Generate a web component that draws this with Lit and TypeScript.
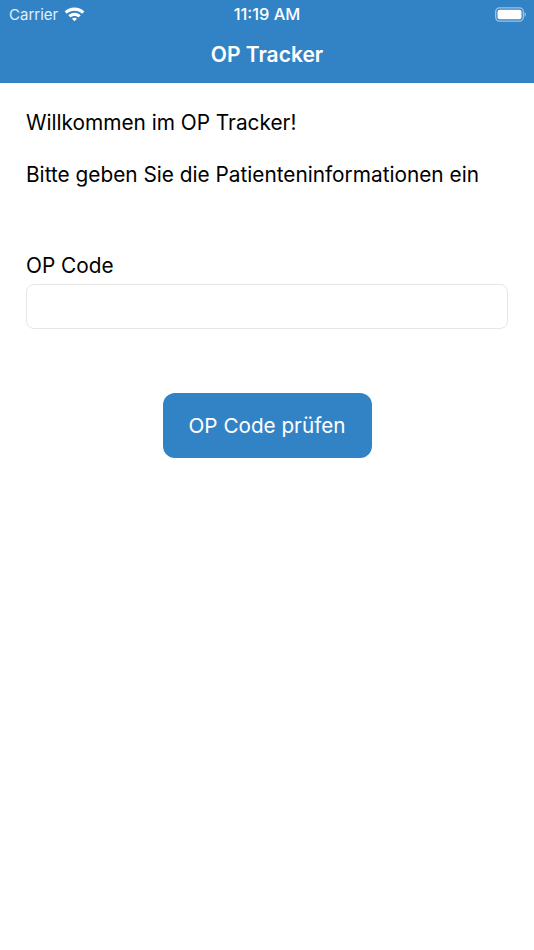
import { LitElement, html, css } from "lit";
import { customElement } from "lit/decorators.js";

@customElement("app-root")
export class AppRoot extends LitElement {
  static styles = css`
    :host {
      display: block;
      width: 534px;
      height: 950px;
      background: #fff;
      font-family: Inter, "Liberation Sans", sans-serif;
      color: #000;
      overflow: hidden;
    }
    .header {
      background: #3283c6;
      height: 83px;
      box-sizing: border-box;
      color: #fff;
      display: flex;
      flex-direction: column;
    }
    .status {
      height: 28px;
      display: grid;
      grid-template-columns: 1fr auto 1fr;
      align-items: center;
      padding: 0 8px;
      font-size: 15px;
    }
    .left { display: flex; align-items: center; gap: 6px; color: #e4eff8; padding-left: 1px; }
    .time { font-weight: 500; font-size: 16.4px; }
    .right { display: flex; justify-content: flex-end; }
    .title {
      flex: 1;
      display: flex;
      align-items: center;
      justify-content: center;
      font-size: 21px;
      font-weight: 600;
      padding-bottom: 3px;
    }
    .content { padding: 27px 26px 0; font-size: 20.8px; line-height: 26px; }
    .content p { margin: 0; }
    .second { margin-top: 26px !important; }
    .label { margin-top: 65px !important; }
    .input {
      margin-top: 5px;
      height: 45px;
      box-sizing: border-box;
      border: 1px solid #e6e6e6;
      border-radius: 8px;
      background: #fff;
    }
    .actions { display: flex; justify-content: center; margin-top: 64px; }
    button {
      width: 209px;
      height: 65px;
      border: none;
      border-radius: 12px;
      background: #3283c6;
      color: #fff;
      font: inherit;
      font-size: 20.7px;
      padding: 1px 0 0;
    }
  `;

  render() {
    return html`
      <div class="header">
        <div class="status">
          <div class="left">
            <span>Carrier</span>
            <svg width="21" height="16" viewBox="0 0 20 15" fill="#fff">
              <path d="M10 1.200c3.600 0 6.900 1.400 9.400 3.800l-2.100 2.200C15.400 5.300 12.800 4.300 10 4.300S4.600 5.300 2.700 7.200L.6 5C3.100 2.600 6.400 1.200 10 1.200z"/>
              <path d="M10 6.300c2.300 0 4.300.9 5.900 2.300l-2.100 2.200C12.800 9.900 11.500 9.400 10 9.400s-2.800.5-3.800 1.400L4.100 8.600C5.700 7.200 7.700 6.300 10 6.300z"/>
              <path d="M10 11c.9 0 1.700.3 2.400 1L10 14.500 7.600 12c.7-.7 1.500-1 2.400-1z"/>
            </svg>
          </div>
          <div class="time">11:19 AM</div>
          <div class="right">
            <svg width="31" height="15" viewBox="0 0 31 15">
              <rect x="0.700" y="0.900" width="27.600" height="13.200" rx="3.800" fill="none" stroke="#9cc4e6" stroke-width="1.300"/>
              <rect x="2.500" y="2.700" width="24" height="9.600" rx="2" fill="#fff"/>
              <path d="M29.500 5.200c.9.300 1.400 1.200 1.400 2.300s-.5 2-1.400 2.300z" fill="#9cc4e6"/>
            </svg>
          </div>
        </div>
        <div class="title">OP Tracker</div>
      </div>
      <div class="content">
        <p>Willkommen im OP Tracker!</p>
        <p class="second">Bitte geben Sie die Patienteninformationen ein</p>
        <p class="label">OP Code</p>
        <div class="input"></div>
        <div class="actions"><button>OP Code prüfen</button></div>
      </div>
    `;
  }
}
